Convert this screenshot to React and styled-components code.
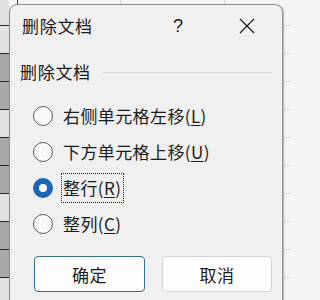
import React from 'react';
import styled, { createGlobalStyle } from 'styled-components';

const GlobalStyle = createGlobalStyle`
  html, body {
    margin: 0;
    padding: 0;
    background: #f4f4f4;
  }
  body {
    font-family: "Noto Sans CJK SC", "Noto Sans", "Liberation Sans", sans-serif;
  }
`;

const FONT = `"Noto Sans CJK SC", "Noto Sans", "Liberation Sans", sans-serif`;

const Page = styled.div`
  position: relative;
  width: 291px;
  height: 300px;
  overflow: hidden;
  background: #f4f4f4;
`;

const Sheet = styled.div`
  display: flex;
  flex-direction: column;
  margin-top: -2px;
`;

const SheetRow = styled.div`
  display: flex;
  height: 28px;
  box-sizing: border-box;
`;

const RowHead = styled.div`
  width: 9px;
  flex: none;
  box-sizing: border-box;
  background: ${(p) => (p.$dark ? '#a9a9a9' : '#e2e2e2')};
  border-bottom: 1px solid #262626;
`;

const RowBody = styled.div`
  flex: 1;
  box-sizing: border-box;
  border-bottom: 1px solid #dcdcdc;
  background: ${(p) =>
    p.$top
      ? 'linear-gradient(90deg, transparent 8px, #3a3a3a 8px, #3a3a3a 9px, transparent 9px, transparent 111px, #d6d6d6 111px, #d6d6d6 112px, transparent 112px, transparent 215px, #d6d6d6 215px, #d6d6d6 216px, transparent 216px)'
      : 'transparent'};
`;

const Dialog = styled.div`
  position: absolute;
  left: 9px;
  top: 4px;
  width: 274px;
  height: 310px;
  box-sizing: border-box;
  background: #f0f0f0;
  border: 1px solid #8e8e8e;
  border-radius: 8px;
  box-shadow: 1px 1px 2px rgba(0, 0, 0, 0.28);
  font-family: ${FONT};
  color: #1b1b1b;
  display: flex;
  flex-direction: column;
`;

const TitleBar = styled.div`
  display: flex;
  align-items: center;
  height: 42px;
  padding: 0 12px 0 12px;
`;

const Title = styled.div`
  flex: 1;
  font-size: 17px;
  line-height: 20px;
  letter-spacing: 0.7px;
`;

const TitleButton = styled.div`
  width: ${(p) => p.$w}px;
  height: 32px;
  display: flex;
  align-items: center;
  justify-content: center;
  font-size: 18px;
  font-family: "Liberation Sans", sans-serif;
`;

const GroupHeader = styled.div`
  display: flex;
  align-items: center;
  gap: 12px;
  height: 24px;
  margin-top: 13px;
  padding: 0 10px 0 10px;
`;

const GroupLabel = styled.div`
  font-size: 17px;
  line-height: 20px;
  letter-spacing: 0.7px;
`;

const GroupRule = styled.div`
  flex: 1;
  height: 1px;
  background: #d8d8d8;
`;

const RadioList = styled.div`
  display: flex;
  flex-direction: column;
  margin-top: 14px;
  padding-left: 23px;
`;

const RadioRow = styled.label`
  display: flex;
  align-items: center;
  height: 36px;
`;

const Circle = styled.span`
  width: 20px;
  height: 20px;
  box-sizing: border-box;
  border-radius: 50%;
  flex: none;
  background: ${(p) => (p.$on ? '#fff' : '#f8f8f8')};
  border: ${(p) => (p.$on ? '6px solid #1c68b6' : '1px solid #5c5c5c')};
`;

const Text = styled.span`
  margin-left: 8px;
  padding: 4px 2px 4px 1px;
  border: 1px dotted ${(p) => (p.$focus ? '#222' : 'transparent')};
  font-size: 17px;
  line-height: 20px;
  letter-spacing: 0.4px;
`;

const Key = styled.span`
  text-decoration: underline;
  text-underline-offset: 2px;
  text-decoration-thickness: 1px;
`;

const Buttons = styled.div`
  display: flex;
  gap: 17px;
  margin-top: 14px;
  padding-left: 24px;
`;

const Button = styled.button`
  width: ${(p) => p.$w}px;
  height: 36px;
  box-sizing: border-box;
  border-radius: 4px;
  background: #fdfdfd;
  border: 1px solid ${(p) => (p.$primary ? '#33718f' : '#d3d3d3')};
  font-family: ${FONT};
  font-size: 17px;
  color: #1b1b1b;
  padding: 0;
  letter-spacing: 0.5px;
`;

const CloseIcon = () => (
  <svg width="16" height="16" viewBox="0 0 16 16">
    <path d="M1 1 L15 15 M15 1 L1 15" stroke="#1b1b1b" strokeWidth="1.2" />
  </svg>
);

const rowShades = [false, false, true, true, false, true, true, false, true, true, false];

const options = [
  { text: '右侧单元格左移', key: 'L' },
  { text: '下方单元格上移', key: 'U' },
  { text: '整行', key: 'R', on: true },
  { text: '整列', key: 'C' },
];

export default function App() {
  return (
    <Page>
      <GlobalStyle />
      <Sheet>
        {rowShades.map((dark, i) => (
          <SheetRow key={i}>
            <RowHead $dark={dark} />
            <RowBody $top={i === 0} />
          </SheetRow>
        ))}
      </Sheet>
      <Dialog>
        <TitleBar>
          <Title>删除文档</Title>
          <TitleButton $w={92}>?</TitleButton>
          <TitleButton $w={46}>
            <CloseIcon />
          </TitleButton>
        </TitleBar>
        <GroupHeader>
          <GroupLabel>删除文档</GroupLabel>
          <GroupRule />
        </GroupHeader>
        <RadioList>
          {options.map((o) => (
            <RadioRow key={o.key}>
              <Circle $on={o.on} />
              <Text $focus={o.on}>
                {o.text}(<Key>{o.key}</Key>)
              </Text>
            </RadioRow>
          ))}
        </RadioList>
        <Buttons>
          <Button $primary $w={111}>确定</Button>
          <Button $w={110}>取消</Button>
        </Buttons>
      </Dialog>
    </Page>
  );
}
